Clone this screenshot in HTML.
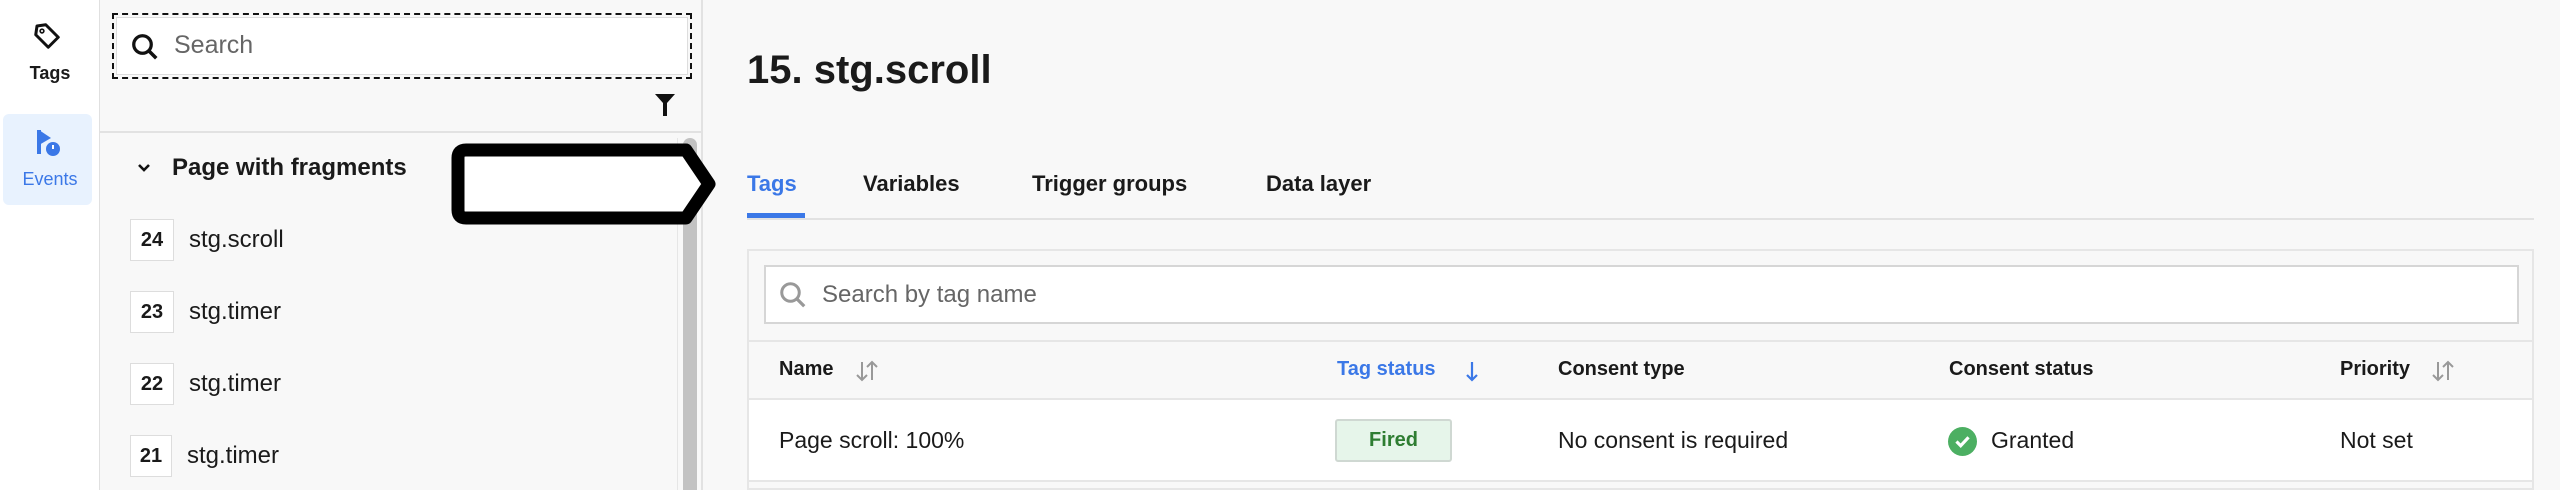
<!DOCTYPE html>
<html><head><meta charset="utf-8"><style>
*{margin:0;padding:0;box-sizing:border-box}
body{width:2560px;height:490px;overflow:hidden;background:#f8f8f8;font-family:"Liberation Sans",sans-serif;color:#1a1a1a;position:relative}
.a{position:absolute}
</style></head><body>
<div class="a" style="left:0;top:0;width:100px;height:490px;background:#fff;border-right:1px solid #e0e0e0"></div>
<svg class="a" style="left:32px;top:21px" width="30" height="30" viewBox="0 0 24 24"><path d="M4 4 L11 3 L21 13 L13 21 L3 11 Z" fill="none" stroke="#111" stroke-width="2.4" stroke-linejoin="round"/><circle cx="8" cy="8" r="1.5" fill="none" stroke="#111" stroke-width="1.3"/></svg>
<div class="a" style="left:0;width:100px;top:63px;text-align:center;font-size:18px;font-weight:bold">Tags</div>
<div class="a" style="left:3px;top:114px;width:89px;height:91px;background:#e8f2fe;border-radius:6px"></div>
<svg class="a" style="left:36px;top:128px" width="26" height="30" viewBox="0 0 26 30"><path d="M3 2 V26" stroke="#3b78e7" stroke-width="4"/><path d="M3 2 L15 10 L3 17 Z" fill="#3b78e7"/><circle cx="17" cy="21" r="7" fill="#3b78e7"/><path d="M17 17 V21" stroke="#fff" stroke-width="2"/></svg>
<div class="a" style="left:0;width:100px;top:169px;text-align:center;font-size:18px;color:#3b78e7">Events</div>
<div class="a" style="left:100px;top:0;width:603px;height:490px;background:#f8f8f8;border-right:2px solid #e2e2e2"></div>
<div class="a" style="left:112px;top:13px;width:580px;height:66px;border:2px dashed #111"></div>
<div class="a" style="left:116px;top:17px;width:572px;height:58px;background:#fff;border:1px solid #ddd"></div>
<svg class="a" style="left:130px;top:32px" width="30" height="30" viewBox="0 0 24 24"><circle cx="10" cy="10" r="7" fill="none" stroke="#111" stroke-width="2.6"/><path d="M15 15 L21 21" stroke="#111" stroke-width="2.8"/></svg>
<div class="a" style="left:174px;top:31px;font-size:25px;color:#666">Search</div>
<svg class="a" style="left:655px;top:94px" width="20" height="22" viewBox="0 0 20 22"><path d="M0 0 H20 L12 9 V22 H8 V9 Z" fill="#111"/></svg>
<div class="a" style="left:100px;top:131px;width:601px;height:2px;background:#e2e2e2"></div>
<svg class="a" style="left:137px;top:163px" width="14" height="10" viewBox="0 0 14 10"><path d="M2 2 L7 7 L12 2" fill="none" stroke="#111" stroke-width="2.6"/></svg>
<div class="a" style="left:172px;top:154px;font-size:24px;font-weight:bold">Page with fragments</div>
<div class="a" style="left:677px;top:138px;width:1px;height:352px;background:#e6e6e6"></div>
<div class="a" style="left:683px;top:138px;width:14px;height:352px;background:#c2c2c2;border-radius:7px 7px 0 0"></div>
<svg class="a" style="left:450px;top:142px" width="270" height="84" viewBox="0 0 270 84"><path d="M16 8 H236 L259 42 L236 76 H16 Q8 76 8 68 V16 Q8 8 16 8 Z" fill="#fff" stroke="#000" stroke-width="13" stroke-linejoin="round"/></svg>
<div class="a" style="left:130px;top:219px;width:44px;height:42px;background:#fff;border:1px solid #ddd;font-size:20px;font-weight:bold;text-align:center;line-height:40px">24</div>
<div class="a" style="left:189px;top:226px;font-size:24px">stg.scroll</div>
<div class="a" style="left:130px;top:291px;width:44px;height:42px;background:#fff;border:1px solid #ddd;font-size:20px;font-weight:bold;text-align:center;line-height:40px">23</div>
<div class="a" style="left:189px;top:298px;font-size:24px">stg.timer</div>
<div class="a" style="left:130px;top:363px;width:44px;height:42px;background:#fff;border:1px solid #ddd;font-size:20px;font-weight:bold;text-align:center;line-height:40px">22</div>
<div class="a" style="left:189px;top:370px;font-size:24px">stg.timer</div>
<div class="a" style="left:130px;top:435px;width:42px;height:42px;background:#fff;border:1px solid #ddd;font-size:20px;font-weight:bold;text-align:center;line-height:40px">21</div>
<div class="a" style="left:187px;top:442px;font-size:24px">stg.timer</div>
<div class="a" style="left:747px;top:48px;font-size:40px;font-weight:bold">15. stg.scroll</div>
<div class="a" style="left:747px;top:171px;font-size:22px;font-weight:bold;color:#3b78e7">Tags</div>
<div class="a" style="left:747px;top:213px;width:58px;height:5px;background:#3b78e7"></div>
<div class="a" style="left:863px;top:171px;font-size:22px;font-weight:bold">Variables</div>
<div class="a" style="left:1032px;top:171px;font-size:22px;font-weight:bold">Trigger groups</div>
<div class="a" style="left:1266px;top:171px;font-size:22px;font-weight:bold">Data layer</div>
<div class="a" style="left:747px;top:218px;width:1787px;height:2px;background:#e2e2e2"></div>
<div class="a" style="left:747px;top:249px;width:1787px;height:241px;border:2px solid #e6e6e6;background:#f8f8f8"></div>
<div class="a" style="left:764px;top:265px;width:1755px;height:59px;background:#fff;border:2px solid #d6d6d6"></div>
<svg class="a" style="left:778px;top:280px" width="30" height="30" viewBox="0 0 24 24"><circle cx="10" cy="10" r="7" fill="none" stroke="#999" stroke-width="2.4"/><path d="M15 15 L21 21" stroke="#999" stroke-width="2.6"/></svg>
<div class="a" style="left:822px;top:281px;font-size:24px;color:#666">Search by tag name</div>
<div class="a" style="left:749px;top:340px;width:1783px;height:2px;background:#e6e6e6"></div>
<div class="a" style="left:749px;top:398px;width:1783px;height:84px;background:#fff;border-top:2px solid #e6e6e6;border-bottom:2px solid #e6e6e6"></div>
<div class="a" style="left:779px;top:358px;font-size:20px;font-weight:bold">Name</div>
<svg class="a" style="left:855px;top:360px" width="24" height="22" viewBox="0 0 24 22"><path d="M7 2 V20 M2 15 L7 20 L12 15 M17 20 V2 M12 7 L17 2 L22 7" fill="none" stroke="#999" stroke-width="2"/></svg>
<div class="a" style="left:1337px;top:358px;font-size:20px;font-weight:bold;color:#3b78e7">Tag status</div>
<svg class="a" style="left:1464px;top:360px" width="16" height="22" viewBox="0 0 16 22"><path d="M8 2 V20 M3 15 L8 20 L13 15" fill="none" stroke="#3b78e7" stroke-width="2.2"/></svg>
<div class="a" style="left:1558px;top:358px;font-size:20px;font-weight:bold">Consent type</div>
<div class="a" style="left:1949px;top:358px;font-size:20px;font-weight:bold">Consent status</div>
<div class="a" style="left:2340px;top:358px;font-size:20px;font-weight:bold">Priority</div>
<svg class="a" style="left:2431px;top:360px" width="24" height="22" viewBox="0 0 24 22"><path d="M7 2 V20 M2 15 L7 20 L12 15 M17 20 V2 M12 7 L17 2 L22 7" fill="none" stroke="#999" stroke-width="2"/></svg>
<div class="a" style="left:779px;top:427px;font-size:23px">Page scroll: 100%</div>
<div class="a" style="left:1335px;top:419px;width:117px;height:43px;background:#e6f5ea;border:2px solid #cfd8d2;border-radius:3px;text-align:center;line-height:39px;font-size:20px;font-weight:bold;color:#2e7d32">Fired</div>
<div class="a" style="left:1558px;top:427px;font-size:23px">No consent is required</div>
<svg class="a" style="left:1948px;top:427px" width="29" height="29" viewBox="0 0 24 24"><circle cx="12" cy="12" r="12" fill="#4caf62"/><path d="M7 12 L10.5 15.5 L17 8.5" fill="none" stroke="#fff" stroke-width="2.6"/></svg>
<div class="a" style="left:1991px;top:427px;font-size:23px">Granted</div>
<div class="a" style="left:2340px;top:427px;font-size:23px">Not set</div>
</body></html>
